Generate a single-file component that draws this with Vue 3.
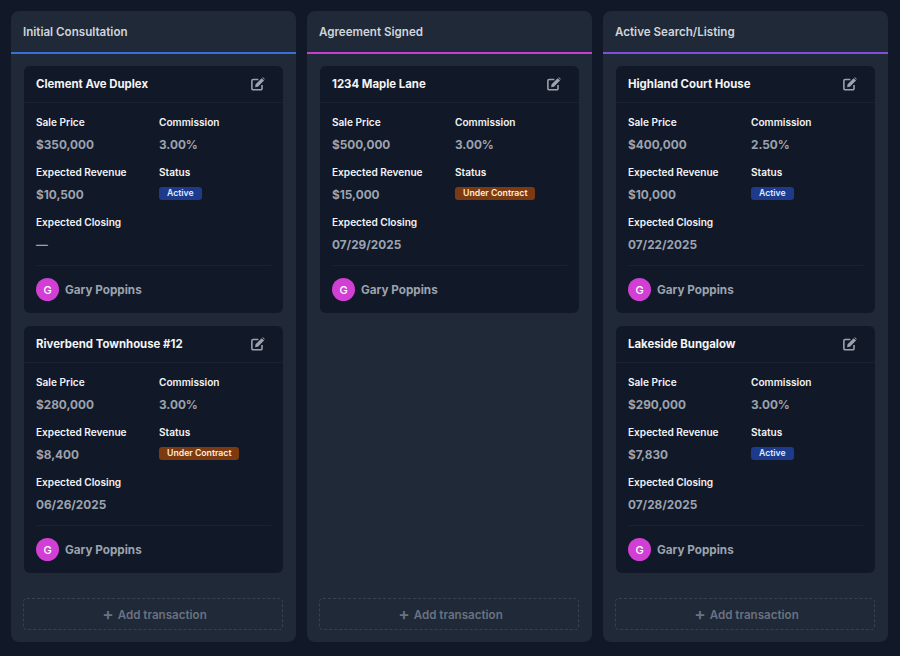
<script setup>
const columns = [
  {
    title: 'Initial Consultation',
    accent: '#3b6fd8',
    deals: [
      { name: 'Clement Ave Duplex', price: '$350,000', commission: '3.00%', revenue: '$10,500', status: 'Active', closing: '—' },
      { name: 'Riverbend Townhouse #12', price: '$280,000', commission: '3.00%', revenue: '$8,400', status: 'Under Contract', closing: '06/26/2025' }
    ]
  },
  {
    title: 'Agreement Signed',
    accent: '#c53fd0',
    deals: [
      { name: '1234 Maple Lane', price: '$500,000', commission: '3.00%', revenue: '$15,000', status: 'Under Contract', closing: '07/29/2025' }
    ]
  },
  {
    title: 'Active Search/Listing',
    accent: '#8250d8',
    deals: [
      { name: 'Highland Court House', price: '$400,000', commission: '2.50%', revenue: '$10,000', status: 'Active', closing: '07/22/2025' },
      { name: 'Lakeside Bungalow', price: '$290,000', commission: '3.00%', revenue: '$7,830', status: 'Active', closing: '07/28/2025' }
    ]
  }
]
</script>

<template>
  <div class="board">
    <section v-for="col in columns" :key="col.title" class="column">
      <header class="column-header" :style="{ borderBottomColor: col.accent }">{{ col.title }}</header>
      <div class="deal-list">
        <article v-for="deal in col.deals" :key="deal.name" class="deal">
          <div class="deal-header">
            <span class="deal-name">{{ deal.name }}</span>
            <svg class="edit-icon" viewBox="0 0 16 16" fill="none" stroke="currentColor">
              <path d="M12.6 9.2v3.9a1.4 1.4 0 0 1-1.4 1.4H2.4A1.4 1.4 0 0 1 1 13.100V4.300a1.400 1.400 0 0 1 1.400-1.400h6" stroke-width="1.800" />
              <path d="M5.200 8.300 12.200 1.300l2.700 2.700-7 7-3.200.6zM13 .8l.7-.4 2 2-.4.8z" fill="currentColor" stroke="none" />
            </svg>
          </div>
          <div class="deal-body">
            <div class="fields">
              <div class="field">
                <div class="label">Sale Price</div>
                <div class="value">{{ deal.price }}</div>
              </div>
              <div class="field">
                <div class="label">Commission</div>
                <div class="value">{{ deal.commission }}</div>
              </div>
              <div class="field">
                <div class="label">Expected Revenue</div>
                <div class="value">{{ deal.revenue }}</div>
              </div>
              <div class="field">
                <div class="label">Status</div>
                <span class="badge" :class="deal.status === 'Active' ? 'badge-active' : 'badge-contract'">{{ deal.status }}</span>
              </div>
              <div class="field">
                <div class="label">Expected Closing</div>
                <div class="value">{{ deal.closing }}</div>
              </div>
            </div>
            <div class="agent">
              <span class="avatar">G</span>
              <span class="agent-name">Gary Poppins</span>
            </div>
          </div>
        </article>
      </div>
      <button class="add-btn"><span class="plus">+</span>Add transaction</button>
    </section>
  </div>
</template>

<style>
body {
  background: #111827;
}
</style>

<style scoped>
.board {
  display: grid;
  grid-template-columns: repeat(3, 285px);
  gap: 11px;
  padding: 11px 0 14px 11px;
  height: 656px;
  box-sizing: border-box;
  background: #111827;
  font-family: Inter, "Liberation Sans", sans-serif;
}

.column {
  display: flex;
  flex-direction: column;
  background: #1f2937;
  border-radius: 8px;
  overflow: hidden;
}

.column-header {
  height: 43px;
  box-sizing: border-box;
  padding: 13px 12px 0;
  border-bottom: 2px solid;
  font-size: 11.6px;
  line-height: 16px;
  font-weight: 600;
  color: #d1d5db;
}

.deal-list {
  flex: 1;
  display: flex;
  flex-direction: column;
  gap: 13px;
  padding: 12px 13px 0;
}

.deal {
  background: #111827;
  border-radius: 6px;
}

.deal-header {
  display: flex;
  align-items: center;
  justify-content: space-between;
  height: 37px;
  box-sizing: border-box;
  padding: 0 18px 0 12px;
  border-bottom: 1px solid #1a2230;
}

.deal-name {
  font-size: 11.4px;
  font-weight: 700;
  color: #f3f4f6;
}

.edit-icon {
  width: 14px;
  height: 14px;
  color: #9ca3af;
}

.deal-body {
  padding: 11px 12px 0;
}

.fields {
  display: grid;
  grid-template-columns: 123px 1fr;
  grid-auto-rows: 50px;
  margin-bottom: 1px;
}

.label {
  font-size: 10.1px;
  line-height: 16px;
  font-weight: 600;
  color: #f3f4f6;
}

.value {
  margin-top: 7px;
  font-size: 11.8px;
  line-height: 16px;
  font-weight: 700;
  color: #9ca3af;
}

.badge {
  display: inline-block;
  margin-top: 6px;
  padding: 0 8px;
  height: 13px;
  line-height: 13px;
  border-radius: 3px;
  font-size: 8.7px;
  font-weight: 600;
  color: #f3f4f6;
}

.badge-active {
  background: #1e3a8a;
  color: #dbeafe;
}

.badge-contract {
  background: #7c3a12;
  color: #ffedd5;
}

.agent {
  display: flex;
  align-items: center;
  gap: 6px;
  height: 48px;
  box-sizing: border-box;
  border-top: 1px solid #1a2230;
}

.avatar {
  width: 23px;
  height: 23px;
  border-radius: 50%;
  background: #d13fd4;
  color: #fff;
  font-size: 11px;
  font-weight: 500;
  display: flex;
  align-items: center;
  justify-content: center;
}

.agent-name {
  font-size: 11.7px;
  font-weight: 700;
  color: #9ca3af;
}

.add-btn {
  display: flex;
  align-items: center;
  justify-content: center;
  gap: 4px;
  margin: 0 13px 12px 12px;
  height: 32px;
  padding: 1px 0 0 3px;
  flex-shrink: 0;
  background: transparent;
  border: 1px dashed #374151;
  border-radius: 4px;
  font-family: inherit;
  font-size: 11.6px;
  font-weight: 600;
  color: #6b7280;
}

.plus {
  font-size: 17px;
  line-height: 1;
}
</style>
